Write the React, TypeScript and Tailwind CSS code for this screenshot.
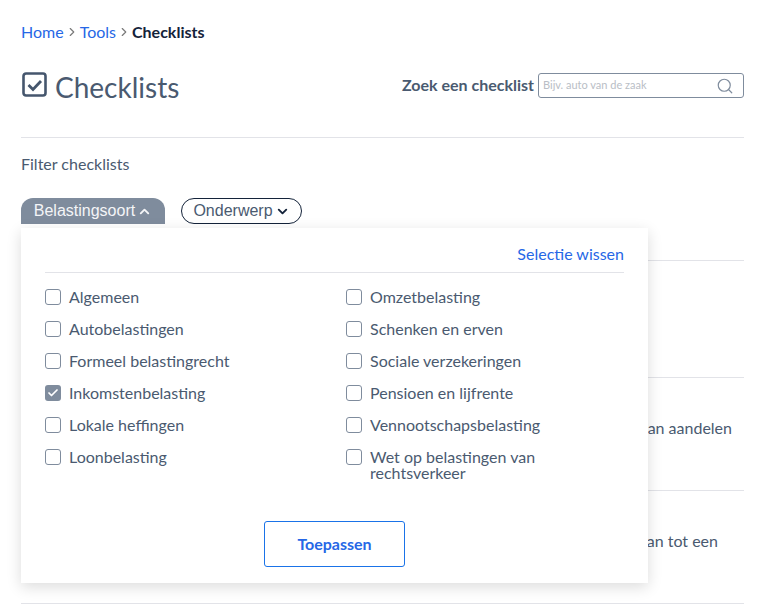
import React from 'react';
import { ChevronDown, ChevronUp, ChevronRight, Search, Check } from 'lucide-react';

const leftOptions = ['Algemeen', 'Autobelastingen', 'Formeel belastingrecht', 'Inkomstenbelasting', 'Lokale heffingen', 'Loonbelasting'];
const rightOptions = ['Omzetbelasting', 'Schenken en erven', 'Sociale verzekeringen', 'Pensioen en lijfrente', 'Vennootschapsbelasting', 'Wet op belastingen van rechtsverkeer'];

function Option({ label, checked }: { label: string; checked?: boolean }) {
  return (
    <label className="flex items-start gap-2 mb-[8px] min-h-[24px] text-[16px] leading-[16px] text-[#4a5a70]">
      <span
        className={
          checked
            ? 'w-4 h-4 shrink-0 rounded-[3px] bg-[#7f8c9d] flex items-center justify-center'
            : 'w-4 h-4 shrink-0 rounded-[3px] border border-[#7f8c9d] bg-white'
        }
      >
        {checked && <Check size={12} strokeWidth={3.5} className="text-white" />}
      </span>
      <span>{label}</span>
    </label>
  );
}

export default function App() {
  return (
    <div className="relative h-[615px] overflow-hidden bg-white pl-[21px] pr-[18px] font-['Lato',sans-serif] text-[#4a5a70]">
      <nav className="pt-[23px] flex items-center h-[41px] text-[16px] leading-[18px]">
        <a className="text-[#2667e6]">Home</a>
        <ChevronRight size={14} className="mx-px text-[#7a7a7a]" />
        <a className="text-[#2667e6]">Tools</a>
        <ChevronRight size={14} className="mx-px text-[#7a7a7a]" />
        <strong className="text-[#14233a] font-bold">Checklists</strong>
      </nav>

      <div className="flex justify-between h-[97px] pt-[31px] border-b border-[#e2e3e8]">
        <div className="flex items-start">
          <svg width="26" height="26" viewBox="0 0 26 26" className="ml-px" fill="none">
            <rect x="1.5" y="1.5" width="22" height="22" rx="2.5" stroke="#45566d" strokeWidth="2.6" />
            <path d="M6.5 13l4.5 4.5 8-8.5" stroke="#45566d" strokeWidth="2.8" />
          </svg>
          <h1 className="ml-[7px] text-[28px] leading-[36px] mt-[-3px] font-normal text-[#4a5a70]">Checklists</h1>
        </div>
        <div className="flex items-start pt-px">
          <span className="font-bold text-[16px] leading-[24px] text-[#4a5a70] mr-[4px]">Zoek een checklist</span>
          <div className="w-[206px] h-[25px] border border-[#7f8c9d] rounded-[3px] flex items-center justify-between pl-[4px] pr-[9px]">
            <span className="text-[11px] text-[#b9bec6]">Bijv. auto van de zaak</span>
            <Search size={18} strokeWidth={1.6} className="text-[#7f8c9d]" />
          </div>
        </div>
      </div>

      <p className="mt-[17px] text-[16px] leading-[18px]">Filter checklists</p>

      <div className="mt-[25px] flex items-start h-[62px] font-['Liberation_Sans',sans-serif] text-[16px]">
        <button className="w-[144px] h-[26px] rounded-t-[12px] bg-[#7f8c9d] text-[#f4f5f7] flex items-center justify-center">
          Belastingsoort
          <ChevronUp size={15} strokeWidth={3} className="ml-[2px]" />
        </button>
        <button className="ml-[16px] w-[121px] h-[26px] rounded-[13px] border border-[#14233a] text-[#4a5a70] flex items-center justify-center">
          Onderwerp
          <ChevronDown size={15} strokeWidth={3} className="ml-[2px] text-[#14233a]" />
        </button>
      </div>

      <div className="border-t border-[#e2e3e8] h-[117px]" />
      <div className="border-t border-[#e2e3e8] h-[113px] flex justify-end pr-[12px] pt-[41px] text-[16px] leading-[18px]">van aandelen</div>
      <div className="border-t border-[#e2e3e8] h-[113px] flex justify-end pr-[26px] pt-[41px] text-[16px] leading-[18px]">van tot een</div>
      <div className="border-t border-[#e2e3e8]" />

      <div className="absolute left-[21px] top-[228px] w-[627px] h-[355px] bg-white shadow-[0_4px_14px_rgba(0,0,0,0.14)] px-[24px]">
        <div className="h-[45px] border-b border-[#e2e3e8] flex items-start justify-end pt-[17px] text-[16px] leading-[18px] text-[#2667e6]">
          Selectie wissen
        </div>
        <div className="grid grid-cols-[301px_1fr] pt-[16px]">
          <div>
            {leftOptions.map((o) => (
              <Option key={o} label={o} checked={o === 'Inkomstenbelasting'} />
            ))}
          </div>
          <div>
            {rightOptions.map((o) => (
              <Option key={o} label={o} />
            ))}
          </div>
        </div>
        <div className="absolute left-0 right-0 bottom-[16px] flex justify-center">
          <button className="w-[141px] h-[46px] border border-[#1a73e8] rounded-[3px] text-[16px] font-bold text-[#2667e6]">
            Toepassen
          </button>
        </div>
      </div>
    </div>
  );
}
